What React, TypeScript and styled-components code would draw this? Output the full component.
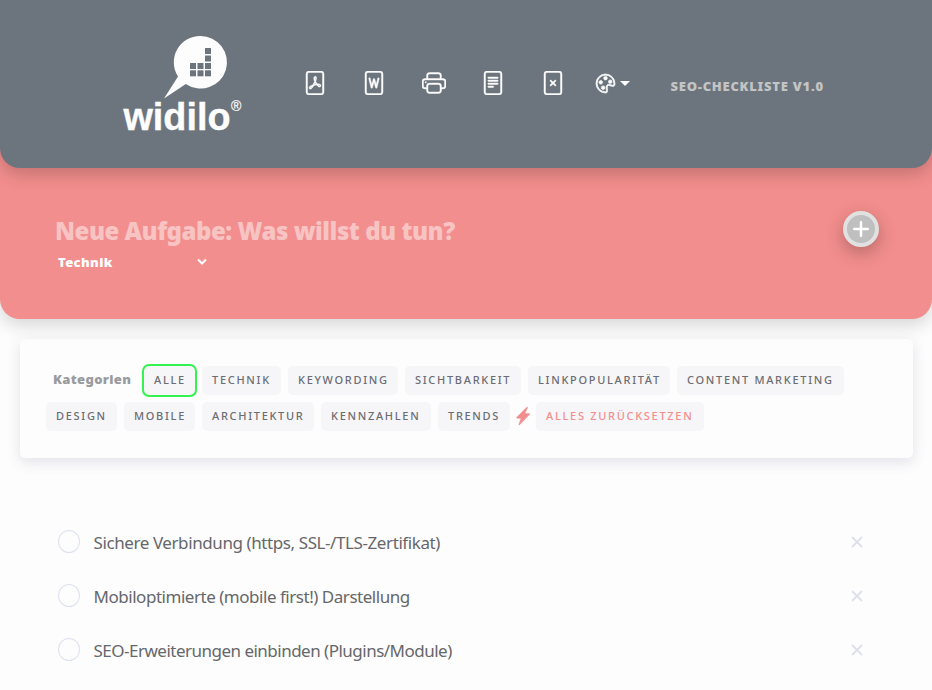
import React from "react";
import styled, { createGlobalStyle, css } from "styled-components";
import { BsFilePdf, BsFileWord, BsPrinter, BsFileText, BsFileX, BsPalette } from "react-icons/bs";

const GlobalStyle = createGlobalStyle`
  * { box-sizing: border-box; }
  body {
    margin: 0;
    background: #fdfdfd;
    font-family: "Noto Sans", "Open Sans", sans-serif;
    color: #666;
    overflow: hidden;
  }
`;

const Page = styled.div`
  height: 690px;
  overflow: hidden;
`;

const Header = styled.header`
  position: relative;
  z-index: 2;
  height: 168px;
  padding-left: 120px;
  display: flex;
  background: #6c757d;
  border-radius: 0 0 20px 20px;
  box-shadow: 0 6px 18px rgba(0, 0, 0, 0.2);
`;

const Logo = styled.svg`
  width: 130px;
  height: 110px;
  margin-top: 30px;
  flex: none;
  fill: #fdfdfd;
  font-family: "Liberation Sans", sans-serif;
`;

const Tools = styled.nav`
  display: flex;
  align-items: center;
  height: 24px;
  margin: 71px 0 0 52.5px;
  gap: 35.5px;
  color: #fdfdfd;
  svg { width: 24px; height: 24px; flex: none; stroke: currentColor; stroke-width: 0.3px; }
`;

const PaletteButton = styled.div`
  display: flex;
  align-items: center;
  gap: 5px;
  margin-left: -4.5px;
  && svg { width: 19px; height: 19px; stroke-width: 0.6px; overflow: visible; }
`;

const Caret = styled.i`
  border: 5px solid transparent;
  border-top-color: #fdfdfd;
  border-bottom: 0;
`;

const Version = styled.div`
  margin: 76px 0 0 41px;
  font-size: 13px;
  line-height: 20px;
  font-weight: 900;
  letter-spacing: 0.75px;
  white-space: nowrap;
  color: #c3c4c5;
`;

const NewTask = styled.section`
  position: relative;
  z-index: 1;
  height: 171px;
  margin-top: -20px;
  padding: 66px 53px 0 55px;
  display: flex;
  justify-content: space-between;
  background: #f28e8d;
  border-radius: 0 0 20px 20px;
  box-shadow: 0 6px 18px rgba(0, 0, 0, 0.16);
`;

const TaskTitle = styled.div`
  font-size: 24px;
  line-height: 34px;
  font-weight: 900;
  letter-spacing: -0.48px;
  white-space: nowrap;
  color: #f8c3c3;
`;

const CategorySelect = styled.div`
  display: flex;
  align-items: center;
  justify-content: space-between;
  width: 152px;
  height: 20px;
  margin-top: 4px;
  padding-left: 3px;
  font-size: 13px;
  font-weight: 900;
  letter-spacing: 0.4px;
  color: #fff;
`;

const AddButton = styled.button`
  width: 36px;
  height: 36px;
  margin-top: -3px;
  padding: 0;
  display: grid;
  place-items: center;
  border: 4px solid #e2e1e1;
  border-radius: 50%;
  background: #bfbfbf;
  box-shadow: 0 6px 18px rgba(0, 0, 0, 0.26);
`;

const Filters = styled.section`
  height: 119px;
  margin: 20px 19px 0 20px;
  padding: 27px 26px 0;
  display: flex;
  flex-direction: column;
  gap: 7px;
  background: #fdfdfd;
  border-radius: 5px;
  box-shadow: 0 4px 14px rgba(70, 70, 120, 0.15);
`;

const FilterRow = styled.div`
  display: flex;
  align-items: center;
  height: 29px;
  gap: 7px;
`;

const FilterLabel = styled.div`
  width: 89px;
  padding: 0 0 3px 7px;
  font-size: 13px;
  font-weight: 900;
  letter-spacing: 0.35px;
  color: #999b9f;
`;

const Chip = styled.button<{ $width: number; $active?: boolean; $danger?: boolean }>`
  width: ${(p) => p.$width}px;
  height: 29px;
  flex: none;
  padding: 0 0 2px 10px;
  border: 0;
  border-radius: 5px;
  background: #f6f6f9;
  color: ${(p) => (p.$danger ? "#f28e8d" : "#6c6d72")};
  font: 500 11px/27px "Noto Sans", sans-serif;
  letter-spacing: 1.7px;
  text-align: left;
  white-space: nowrap;
  ${(p) => p.$active && css`
    height: 33px;
    margin-right: -2px;
    border: 2px solid #34f24f;
    border-radius: 7px;
  `}
`;

const Bolt = styled.svg`
  width: 14px;
  height: 18px;
  margin: -2px -1px 0;
  flex: none;
  fill: #f28e8d;
  stroke: #f28e8d;
  stroke-width: 0.4px;
  overflow: visible;
`;

const TaskList = styled.ul`
  list-style: none;
  margin: 57px 0 0;
  padding: 0 69px 0 58px;
`;

const Task = styled.li<{ $track: number }>`
  display: flex;
  align-items: center;
  height: 54px;
  font-size: 17px;
  letter-spacing: ${(p) => p.$track}px;
  color: #66676a;
  span { flex: 1; white-space: nowrap; }
`;

const Check = styled.i`
  width: 22px;
  height: 23px;
  margin: -2px 13.5px 0 0;
  border: 1px solid #dfe1ef;
  border-radius: 50%;
`;

const rowOne = [
  { label: "TECHNIK", width: 79 },
  { label: "KEYWORDING", width: 110 },
  { label: "SICHTBARKEIT", width: 116 },
  { label: "LINKPOPULARITÄT", width: 142 },
  { label: "CONTENT MARKETING", width: 167 },
];

const rowTwo = [
  { label: "DESIGN", width: 71 },
  { label: "MOBILE", width: 71 },
  { label: "ARCHITEKTUR", width: 112 },
  { label: "KENNZAHLEN", width: 110 },
  { label: "TRENDS", width: 72 },
];

const tasks = [
  { text: "Sichere Verbindung (https, SSL-/TLS-Zertifikat)", track: -0.41 },
  { text: "Mobiloptimierte (mobile first!) Darstellung", track: -0.47 },
  { text: "SEO-Erweiterungen einbinden (Plugins/Module)", track: -0.51 },
];

const squares = [[85, 18], [85, 25.5], [70, 33], [77.5, 33], [85, 33], [70, 40.3], [77.5, 40.3], [85, 40.3]];

export default function App() {
  return (
    <Page>
      <GlobalStyle />
      <Header>
        <Logo viewBox="0 0 130 110">
          <path d="M80.300 6a26.300 26.300 0 1 1-14.500 48L44 68.500 58 46.500A26.300 26.300 0 0 1 80.300 6z" />
          {squares.map(([x, y]) => (
            <rect key={`${x}-${y}`} x={x} y={y} width="6" height="6" fill="#6c757d" />
          ))}
          <text x="3.500" y="100" fontSize="39" fontWeight="700" stroke="#fdfdfd" strokeWidth="0.400" textLength="107" lengthAdjust="spacingAndGlyphs">widilo</text>
          <text x="111" y="80.500" fontSize="14" stroke="#fdfdfd" strokeWidth="0.200">®</text>
        </Logo>
        <Tools>
          <BsFilePdf />
          <BsFileWord />
          <BsPrinter />
          <BsFileText />
          <BsFileX />
          <PaletteButton>
            <BsPalette />
            <Caret />
          </PaletteButton>
        </Tools>
        <Version>SEO-CHECKLISTE V1.0</Version>
      </Header>
      <NewTask>
        <div>
          <TaskTitle>Neue Aufgabe: Was willst du tun?</TaskTitle>
          <CategorySelect>
            Technik
            <svg width="10" height="8" viewBox="0 0 10 8" fill="none" stroke="#fff" strokeWidth="2"><path d="M1 1.500l4 4 4-4" /></svg>
          </CategorySelect>
        </div>
        <AddButton aria-label="Hinzufügen">
          <svg width="16" height="16" fill="none" stroke="#fff" strokeWidth="2.500" strokeLinecap="round"><path d="M8 1.200v13.600M1.200 8h13.600" /></svg>
        </AddButton>
      </NewTask>
      <Filters>
        <FilterRow>
          <FilterLabel>Kategorien</FilterLabel>
          <Chip $width={55} $active>ALLE</Chip>
          {rowOne.map((c) => <Chip key={c.label} $width={c.width}>{c.label}</Chip>)}
        </FilterRow>
        <FilterRow>
          {rowTwo.map((c) => <Chip key={c.label} $width={c.width}>{c.label}</Chip>)}
          <Bolt viewBox="0 0 14 18">
            <path d="M10.700 0.200c.5-.4 1 0 .8.600L9 6.600h4.100c.6 0 .8.500.4.900L3.700 17.700c-.5.500-1 .1-.8-.5L5 11.200H1.100c-.6 0-.8-.5-.4-.9z" />
          </Bolt>
          <Chip $width={168} $danger>ALLES ZURÜCKSETZEN</Chip>
        </FilterRow>
      </Filters>
      <TaskList>
        {tasks.map((t) => (
          <Task key={t.text} $track={t.track}>
            <Check />
            <span>{t.text}</span>
            <svg width="12" height="12" fill="none" stroke="#dddfec" strokeWidth="1.800"><path d="M1 1l10 10M11 1L1 11" /></svg>
          </Task>
        ))}
      </TaskList>
    </Page>
  );
}
